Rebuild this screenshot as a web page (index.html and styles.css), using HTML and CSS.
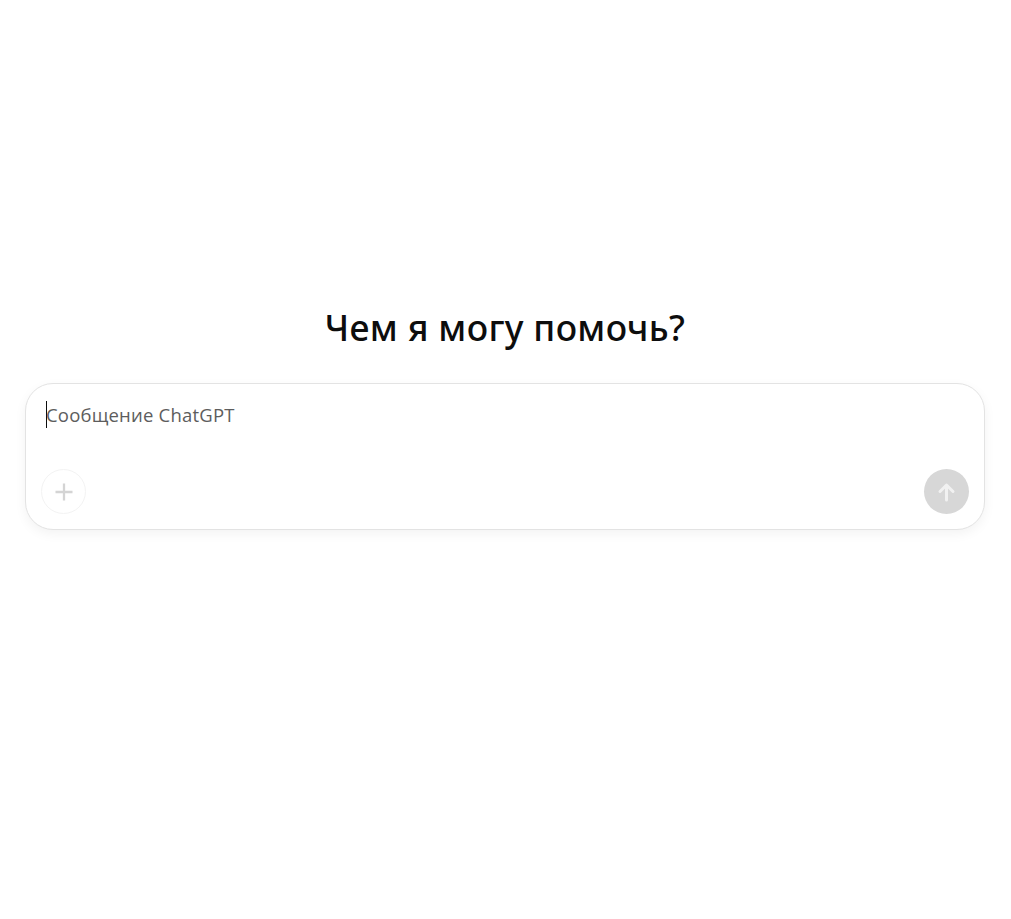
FILE: index.html
```html
<!DOCTYPE html>
<html lang="ru">
<head>
    <meta charset="UTF-8">
    <meta name="viewport" content="width=device-width, initial-scale=1.0">
    <title>ChatGPT</title>
    <link rel="stylesheet" href="styles.css">
</head>
<body>
    <main class="page">
        <h1 class="title">Чем я могу помочь?</h1>
        <form class="composer">
            <div class="prompt">
                <span class="caret"></span>
                <span class="placeholder">Сообщение ChatGPT</span>
            </div>
            <div class="actions">
                <button type="button" class="btn-add" aria-label="Добавить">
                    <svg width="18" height="18" viewBox="0 0 18 18" fill="none" stroke="#d4d4d4" stroke-width="2.3">
                        <path d="M9 .5v17M.5 9h17"/>
                    </svg>
                </button>
                <button type="button" class="btn-send" aria-label="Отправить">
                    <svg width="20" height="20" viewBox="0 0 20 20" fill="none" stroke="#f1f1f1" stroke-width="3" stroke-linecap="round" stroke-linejoin="round">
                        <path d="M9.5 18V3M3 9.5L9.5 3l6.5 6.5"/>
                    </svg>
                </button>
            </div>
        </form>
    </main>
</body>
</html>
```

FILE: styles.css
```css
body, html {
    margin: 0;
    padding: 0;
    height: 100%;
    background: #fff;
    font-family: 'Open Sans', 'Noto Sans', sans-serif;
    overflow: hidden;
}
.page {
    height: 100%;
    box-sizing: border-box;
    padding: 305px 26px 0 25px;
    display: flex;
    flex-direction: column;
    align-items: center;
}
.title {
    margin: 0 0 34px;
    font-family: 'Noto Sans', 'Open Sans', sans-serif;
    font-size: 35.5px;
    line-height: 44px;
    font-weight: 500;
    letter-spacing: 0.35px;
    color: #0d0d0d;
    text-align: center;
}
.composer {
    width: 100%;
    height: 147px;
    box-sizing: border-box;
    padding: 17px 15px 15px;
    display: flex;
    flex-direction: column;
    justify-content: space-between;
    background: #fff;
    border: 1px solid #e3e3e3;
    border-radius: 28px;
    box-shadow: 0 4px 12px rgba(0,0,0,0.05);
}
.prompt {
    display: flex;
    align-items: center;
    height: 27px;
    padding-left: 5px;
}
.caret {
    width: 1px;
    height: 27px;
    margin-right: -1px;
    background: #0d0d0d;
}
.placeholder {
    font-size: 18.5px;
    line-height: 27px;
    letter-spacing: 0.2px;
    color: #5d5d5d;
}
.actions {
    display: flex;
    justify-content: space-between;
    align-items: center;
}
.btn-add, .btn-send {
    width: 45px;
    height: 45px;
    padding: 0;
    display: flex;
    align-items: center;
    justify-content: center;
    border-radius: 50%;
    cursor: pointer;
}
.btn-add {
    background: #fff;
    border: 1px solid #f3f3f3;
}
.btn-send {
    background: #d7d7d7;
    border: none;
}
```
